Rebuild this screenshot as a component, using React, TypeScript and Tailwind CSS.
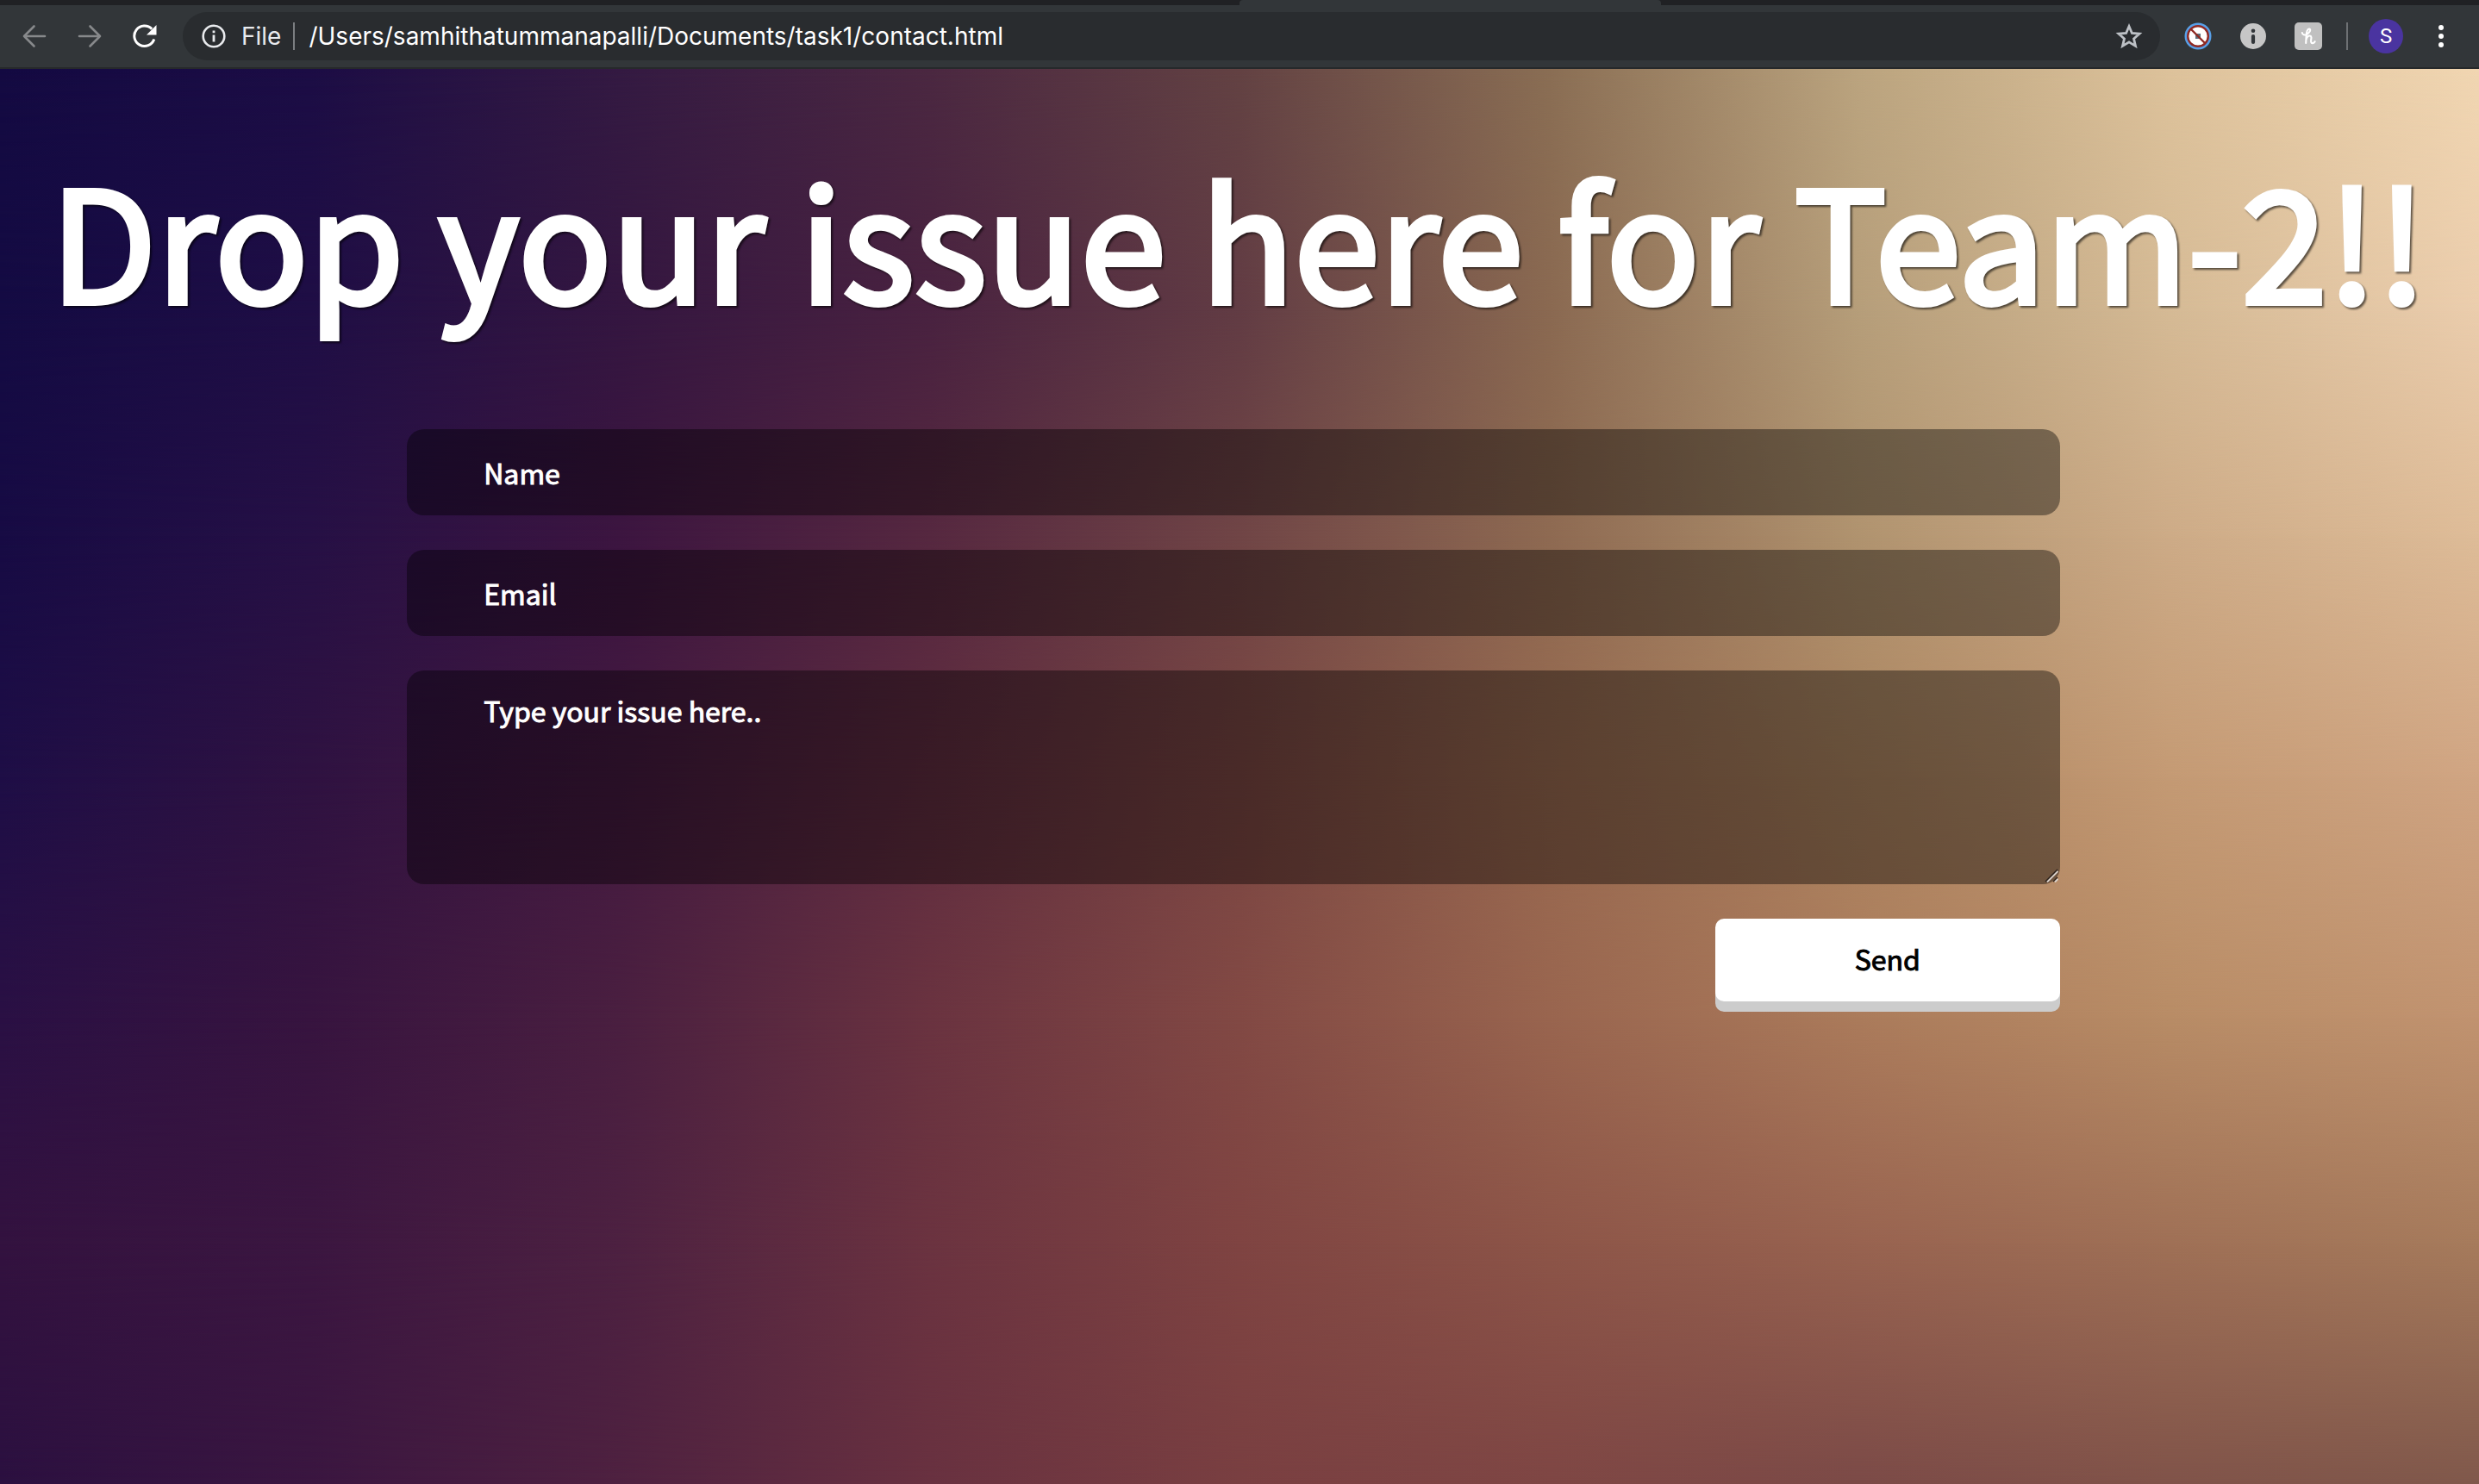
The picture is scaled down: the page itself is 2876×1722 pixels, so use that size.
import React from 'react';

const gradientRows = [
  'bg-[linear-gradient(to_right,#140a42,#1c0d45,#341a42,#4b2841,#634243,#8a6e54,#bba47f,#ddc29b,#f1d6b2)]',
  'bg-[linear-gradient(to_right,#140b43,#1f0e45,#341640,#492240,#623c44,#8a6951,#b69e7a,#d5ba95,#ebcdad)] mask-[linear-gradient(to_bottom,transparent_0%,black_17%)]',
  'bg-[linear-gradient(to_right,#170b44,#261045,#3c1540,#562840,#704546,#8e6a52,#b0936f,#cdab87,#debc98)] mask-[linear-gradient(to_bottom,transparent_17%,black_33%)]',
  'bg-[linear-gradient(to_right,#1e0e46,#2f1241,#441a40,#602d40,#7b4743,#986a50,#ad8561,#c49a74,#d0a583)] mask-[linear-gradient(to_bottom,transparent_33%,black_50%)]',
  'bg-[linear-gradient(to_right,#2a1044,#37143f,#4a1f40,#6a3340,#824944,#99654f,#ab7b5b,#b88c66,#c19370)] mask-[linear-gradient(to_bottom,transparent_50%,black_67%)]',
  'bg-[linear-gradient(to_right,#33123f,#3b1640,#4d2141,#6b3340,#7f4442,#8d5548,#986350,#9f7056,#a67b5c)] mask-[linear-gradient(to_bottom,transparent_67%,black_83%)]',
  'bg-[linear-gradient(to_right,#2b1040,#3a1640,#4e2140,#683140,#793f41,#7e4644,#7b4a47,#805349,#80584b)] mask-[linear-gradient(to_bottom,transparent_83%,black_100%)]',
];

function Backdrop() {
  return (
    <div aria-hidden="true" className="absolute inset-0 -z-10">
      {gradientRows.map((row) => (
        <div key={row} className={`absolute inset-0 ${row}`} />
      ))}
    </div>
  );
}

function TabStrip() {
  return (
    <div className="flex h-1.5 bg-[#202124]">
      <div className="w-1/2" />
      <div className="w-[17%] rounded-t-sm bg-[#323639]" />
    </div>
  );
}

function Toolbar() {
  return (
    <div className="flex h-[74px] items-center border-b-2 border-[#26292b] bg-[#323639] pr-6 pl-5">
      <button aria-label="Back" className="flex size-10 items-center justify-center text-[#87898b]">
        <svg width="28" height="28" viewBox="0 0 28 28" fill="none" stroke="currentColor" strokeWidth="2.6" strokeLinecap="round" strokeLinejoin="round">
          <path d="M26 14H2M13.5 2.5 2 14l11.500 11.500" />
        </svg>
      </button>
      <button aria-label="Forward" className="ml-6 flex size-10 items-center justify-center text-[#87898b]">
        <svg width="28" height="28" viewBox="0 0 28 28" fill="none" stroke="currentColor" strokeWidth="2.6" strokeLinecap="round" strokeLinejoin="round">
          <path d="M2 14h24M14.500 2.500 26 14 14.500 25.500" />
        </svg>
      </button>
      <button aria-label="Reload" className="ml-6 flex size-10 items-center justify-center text-white">
        <svg width="28" height="28" viewBox="0 0 28 28">
          <path d="M24.800 17.500A11.800 11.800 0 1 1 22.200 5.600" fill="none" stroke="currentColor" strokeWidth="3" />
          <path d="M27.500 1v11.500H16z" fill="currentColor" />
        </svg>
      </button>
      <div className="ml-6 flex h-14 flex-1 items-center rounded-full bg-[#292c2f] pr-5 pl-[22px] font-[Inter,sans-serif] text-[28px] text-[#e8eaed]">
        <svg width="28" height="28" viewBox="0 0 28 28" aria-hidden="true">
          <circle cx="14" cy="14" r="12.300" fill="none" stroke="currentColor" strokeWidth="2.600" />
          <path d="M12.600 12.500h2.800v8h-2.800zM12.600 7.500h2.800v2.800h-2.800z" fill="currentColor" />
        </svg>
        <span className="ml-[18px]">File</span>
        <span className="ml-[14px] h-8 w-0.5 bg-[#7b7e81]" />
        <input
          aria-label="Address"
          className="ml-4 min-w-0 flex-1 bg-transparent text-white outline-none"
          defaultValue="/Users/samhithatummanapalli/Documents/task1/contact.html"
        />
        <button aria-label="Bookmark this page" className="text-[#bdc1c6]">
          <svg width="32" height="32" viewBox="0 0 32 32" fill="none" stroke="currentColor" strokeWidth="2.800">
            <path d="M16 4.500 19.400 12.500 28 13.200 21.500 18.900 23.500 27.400 16 22.900 8.500 27.400 10.500 18.900 4 13.200 12.600 12.500z" />
          </svg>
        </button>
      </div>
      <div className="ml-7 flex items-center gap-8">
        <button aria-label="Content blocker">
          <svg width="32" height="32" viewBox="0 0 32 32">
            <circle cx="16" cy="16" r="15.500" fill="#58a0e8" />
            <circle cx="16" cy="16" r="11.800" fill="#fff" stroke="#8f2a24" strokeWidth="2.400" />
            <rect x="13" y="13" width="6" height="6" fill="#5d6f7c" />
            <path d="m7.500 7.500 17 17" stroke="#8f2a24" strokeWidth="2.400" />
          </svg>
        </button>
        <button aria-label="Page information">
          <svg width="32" height="32" viewBox="0 0 32 32">
            <circle cx="16" cy="16" r="15" fill="#c6c6c6" />
            <circle cx="16" cy="9.800" r="2.300" fill="#323639" />
            <path d="M16 16v7" stroke="#323639" strokeWidth="4.200" strokeLinecap="round" />
          </svg>
        </button>
        <button aria-label="Shopping extension">
          <svg width="32" height="32" viewBox="0 0 32 32">
            <rect width="32" height="32" rx="5" fill="#c0c0c0" />
            <path d="M8.800 12c.2 2.600 3.600 3.200 6.200 1.400 3-2 4.200-5.400 2.200-5.800-2.400-.4-3.400 3.600-3.600 8L13.200 24M13.400 20.500c1-3.800 2.800-5 4.200-5 2.600 0 1.800 3.200 1.500 5.200-.3 2.400.6 3.500 2 3.400 1.300-.1 2-.9 2.500-1.900" fill="none" stroke="#fff" strokeWidth="2.100" strokeLinecap="round" />
          </svg>
        </button>
      </div>
      <span className="ml-7 h-8 w-0.5 bg-[#6e7174]" />
      <button aria-label="Profile" className="ml-6 flex size-10 items-center justify-center rounded-full bg-[#4a34a0] font-[Roboto,sans-serif] text-[24px] text-white">
        S
      </button>
      <button aria-label="Menu" className="ml-6 flex size-10 items-center justify-center text-white">
        <svg width="28" height="28" viewBox="0 0 28 28" fill="currentColor">
          <circle cx="14" cy="4" r="3" />
          <circle cx="14" cy="14" r="3" />
          <circle cx="14" cy="24" r="3" />
        </svg>
      </button>
    </div>
  );
}

const fieldStyle =
  'block w-full rounded-[20px] bg-black/40 px-[89px] text-[32px] text-white outline-none [-webkit-text-stroke:1px_white] placeholder:text-white placeholder:opacity-100';

export default function App() {
  return (
    <div className="flex min-h-screen flex-col">
      <header>
        <TabStrip />
        <Toolbar />
      </header>
      <main className="relative isolate flex-1 pr-[14px] font-['Noto_Sans_CJK_JP',sans-serif]">
        <Backdrop />
        <h1 className="-mr-[14px] pt-[74px] pr-0.5 text-center text-[179px] leading-[240px] font-normal whitespace-nowrap text-white drop-shadow-[2px_2px_1px_rgba(0,0,0,0.6)] [-webkit-text-stroke:6px_white]">
          Drop your issue here for Team-2!!
        </h1>
        <form className="mx-auto mt-[104px] flex w-[67%] flex-col gap-10" onSubmit={(e) => e.preventDefault()}>
          <input type="text" aria-label="Name" placeholder="Name" className={`${fieldStyle} h-[100px]`} />
          <input type="email" aria-label="Email" placeholder="Email" className={`${fieldStyle} h-[100px]`} />
          <div className="relative">
            <textarea aria-label="Issue" placeholder="Type your issue here.." className={`${fieldStyle} h-[248px] resize-none py-[22px] leading-[48px]`} />
            <svg aria-hidden="true" width="16" height="16" viewBox="0 0 16 16" fill="none" className="pointer-events-none absolute right-0.5 bottom-0.5">
              <path d="M1 15 15 1M10 15l5-5" stroke="#2a211c" strokeWidth="1.500" />
              <path d="M3 15.500 15.500 3M12 15.500l3.500-3.500" stroke="#d9d2cc" strokeWidth="1.800" />
            </svg>
          </div>
          <button type="submit" className="h-24 w-[400px] self-end rounded-[10px] bg-white pb-1 text-[32px] text-black shadow-[0_12px_0_#cccccc] [-webkit-text-stroke:1px_black]">
            Send
          </button>
        </form>
      </main>
    </div>
  );
}
